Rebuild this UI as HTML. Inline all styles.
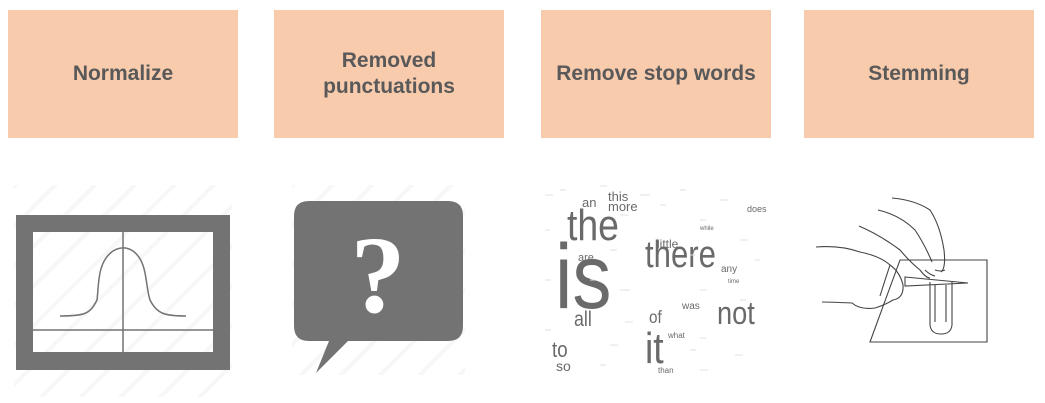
<!DOCTYPE html>
<html><head><style>
html,body{margin:0;padding:0;background:#fff;width:1045px;height:403px;overflow:hidden;position:relative;font-family:"Liberation Sans",sans-serif}
.b{position:absolute;top:10px;height:128px;width:230px;background:#f8cbad;color:#595959;font-weight:bold;font-size:21px;display:flex;align-items:center;justify-content:center;text-align:center;line-height:26px}
svg{position:absolute;left:0;top:0}
</style></head><body>
<div class="b" style="left:8px">Normalize</div>
<div class="b" style="left:274px">Removed<br>punctuations</div>
<div class="b" style="left:541px">Remove stop words</div>
<div class="b" style="left:804px">Stemming</div>
<svg width="1045" height="403" viewBox="0 0 1045 403">
<defs><pattern id="h" width="28" height="28" patternUnits="userSpaceOnUse" patternTransform="rotate(45)"><rect width="4" height="28" fill="#f7f7f7"/></pattern></defs>
<rect x="14" y="185" width="218" height="212" fill="url(#h)"/>
<rect x="292" y="185" width="173" height="190" fill="url(#h)"/>
<path d="M16 215H230V370H16Z M33 232V352H213V232Z" fill="#737373" fill-rule="evenodd"/>
<g stroke="#737373" stroke-width="1.5" fill="none">
<line x1="123" y1="232" x2="123" y2="352"/><line x1="33" y1="330" x2="213" y2="330"/>
<path d="M60 316C85 316 90 314 97 300C99 285 97 262 113 251C120 247 127 247 133 251C148 262 145 285 150 300C157 314 165 316 186 316"/>
</g>
<path d="M309 201H448Q463 201 463 216V326Q463 341 448 341H348L316 373L329 341H309Q294 341 294 326V216Q294 201 309 201Z" fill="#737373"/>
<text x="378" y="312" font-family="Liberation Serif,serif" font-weight="bold" font-size="110" fill="#fff" text-anchor="middle">?</text>
<g font-family="Liberation Sans,sans-serif" fill="#6a6a6a">
<text transform="translate(567 240) scale(0.85 1)" font-size="44">the</text>
<text transform="translate(555 308) scale(0.85 1)" font-size="92">is</text>
<text transform="translate(645 267) scale(0.82 1)" font-size="38">there</text>
<text transform="translate(717 324) scale(0.85 1)" font-size="32">not</text>
<text transform="translate(645 363) scale(0.85 1)" font-size="44">it</text>
<text transform="translate(574 326) scale(0.85 1)" font-size="21">all</text>
<text transform="translate(649 323) scale(0.85 1)" font-size="18">of</text>
<text transform="translate(552 357) scale(0.85 1)" font-size="22">to</text>
<text x="556" y="371" font-size="14">so</text>
<text x="582" y="207" font-size="13">an</text>
<text x="608" y="201" font-size="13">this</text>
<text x="608" y="211" font-size="13">more</text>
<text x="657" y="248" font-size="12">little</text>
<text x="578" y="261" font-size="11">are</text>
<text x="721" y="272" font-size="10">any</text>
<text x="682" y="309" font-size="10">was</text>
<text x="668" y="338" font-size="8">what</text>
<text x="658" y="373" font-size="8">than</text>
<text x="747" y="212" font-size="9">does</text>
<text x="728" y="283" font-size="6">time</text>
<text x="700" y="230" font-size="6">while</text>
</g>
<g stroke="#e2e2e2" stroke-width="1">
<path d="M545 195h8M560 190h6M600 186h7M640 195h10M680 190h6M720 200h8M545 230h5M620 215h9M700 220h6M740 240h8M610 250h7M690 255h5M545 280h6M620 290h10M700 290h7M740 300h6M545 330h6M610 345h8M690 350h6M735 355h8M600 365h6M700 370h8M755 260h5M660 205h6M590 280h5M625 322h8M700 338h6"/>
</g>
<g stroke="#444" stroke-width="1.1" fill="none">
<path d="M900 260H987V342H870Z"/>
<path d="M930 282V325Q931 334 941 334Q951 334 952 325V282"/>
<path d="M935 285V322M946 285V322"/>
<path d="M905 277L968 283L905 286Z"/>
<path d="M816 247Q840 245 860 252Q880 256 890 265Q900 272 903 285Q904 298 893 300Q885 305 875 308Q860 310 852 303Q830 302 822 302"/>
<path d="M890 265Q885 280 880 296"/>
<path d="M859 226Q880 235 900 250Q910 262 920 270Q926 278 930 278M878 210Q900 215 915 230Q925 245 932 262M892 198Q915 200 930 210Q940 225 944 250Q946 268 941 272"/>
<path d="M925 270Q930 275 935 276M935 270Q941 272 945 270"/>
</g>
</svg>
</body></html>
